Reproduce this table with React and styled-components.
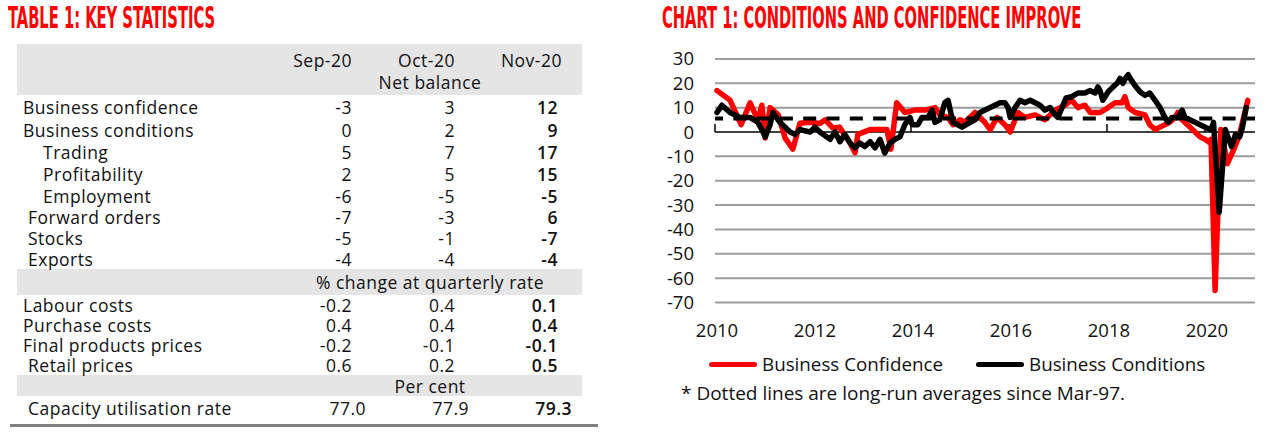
import styled, { createGlobalStyle } from 'styled-components';

const GlobalStyle = createGlobalStyle`
  html, body {
    margin: 0;
    padding: 0;
    background: #fff;
  }
  body {
    font-family: 'Open Sans', 'Noto Sans', sans-serif;
    color: #111;
  }
`;

// table content
const rows = [
  { label: 'Business confidence', indent: 6, h: 23, v: ['-3', '3', '12'] },
  { label: 'Business conditions', indent: 6, h: 23, v: ['0', '2', '9'] },
  { label: 'Trading', indent: 26, h: 22, v: ['5', '7', '17'] },
  { label: 'Profitability', indent: 26, h: 22, v: ['2', '5', '15'] },
  { label: 'Employment', indent: 26, h: 21, v: ['-6', '-5', '-5'] },
  { label: 'Forward orders', indent: 11, h: 21, v: ['-7', '-3', '6'] },
  { label: 'Stocks', indent: 11, h: 21, v: ['-5', '-1', '-7'] },
  { label: 'Exports', indent: 11, h: 21, v: ['-4', '-4', '-4'] },
  { band: '% change at quarterly rate', h: 26 },
  { label: 'Labour costs', indent: 6, h: 20, v: ['-0.2', '0.4', '0.1'] },
  { label: 'Purchase costs', indent: 6, h: 20, v: ['0.4', '0.4', '0.4'] },
  { label: 'Final products prices', indent: 6, h: 20, v: ['-0.2', '-0.1', '-0.1'] },
  { label: 'Retail prices', indent: 11, h: 20, v: ['0.6', '0.2', '0.5'] },
  { band: 'Per cent', h: 21 },
  { label: 'Capacity utilisation rate', indent: 11, h: 24, pr: 10, v: ['77.0', '77.9', '79.3'] },
];

// chart series, [months since Jan-2010, value]
const confidence = [
  [0, 17], [3.2, 13], [5.9, 3], [8.1, 12], [10, 5], [11, 11], [11.8, -2.5], [13, 10], [15, 7],
  [16.7, -2.5], [18.6, -7], [20.3, 3.6], [22.8, 4], [25.2, 3.5], [26.5, 5], [28.4, 1.6], [30, 2],
  [32.6, -4.5], [33.8, -8.5], [34.5, -1], [37.5, 1], [40, 1], [41.6, 1], [42.6, -7], [44, 12],
  [46, 8], [48.5, 9], [51, 9], [53.4, 10], [54.6, 7], [56.6, 6], [57.8, 3], [59.5, 5], [60.7, 4],
  [63.2, 8], [65.6, 4], [66.9, 1], [68.6, 6], [70.5, 3], [71.8, 0], [73.7, 8], [75.4, 6], [77.9, 7],
  [80.3, 5], [81.6, 7], [82.8, 9], [85.2, 11], [86.9, 13], [88.4, 10], [90.1, 11], [91.4, 8],
  [93.8, 8], [95.8, 10], [97.5, 12], [99.2, 12], [99.9, 14.5], [100.7, 10], [102.4, 8], [104.8, 7],
  [106, 3], [107.3, 1], [108.5, 2], [110.9, 4], [112.2, 6], [112.9, 8], [113.9, 5], [115.8, 2],
  [117.1, 0], [118.3, -2], [119.5, -3], [120.8, -4.5], [121, -3], [122, -65], [123.4, 1],
  [125, -13], [126.6, -7], [127.8, -2], [129, 6], [130, 13],
];

const conditions = [
  [0, 8], [1.2, 11], [3.2, 8], [5.6, 6], [8.1, 6], [10, 4], [11, 1], [11.8, -2], [13, 3], [13.7, 8],
  [15.4, 4], [17.9, 0], [19.1, -1], [20.3, 1], [22.8, 0], [24, 2], [25.2, 0], [27.7, -3], [28.9, 0],
  [30.1, -4], [31.3, -1], [32.6, -4.5], [33.8, -6.5], [35, -4.5], [36.2, -6], [37.5, -4],
  [38.7, -6.5], [39.9, -3], [41.1, -8.6], [42.4, -4.5], [43.6, -3], [44.8, -2], [46, 3], [47.3, 6],
  [47.8, 3], [49.2, 3], [50.2, 6], [51.7, 6], [52.7, 9], [53.4, 4], [54.6, 5], [55.8, 12],
  [56.6, 13], [57.8, 4], [60, 2], [62, 4], [63.2, 5], [64.4, 8], [66.9, 10], [69.3, 12], [70.5, 12],
  [71.3, 10], [71.8, 6], [73, 10], [74.2, 13], [75.4, 12], [76.7, 13], [77.9, 12], [79.1, 11],
  [80.3, 9], [81.6, 10], [82.8, 7], [83.5, 6], [84.5, 10], [85.5, 14], [86.9, 14.5], [88.4, 16],
  [90.1, 16], [91.4, 17], [92.6, 16], [93.3, 18.5], [93.8, 17], [94.5, 13], [95.8, 16.5], [97, 18.5],
  [98, 20], [98.7, 22], [99.4, 20], [100.2, 22.5], [100.7, 23.5], [101.2, 22], [102.4, 19],
  [103.6, 16.5], [104.8, 15], [106, 16], [107.3, 13], [108.5, 10], [109.7, 6], [110.5, 4],
  [111.4, 6], [112.9, 6], [113.9, 9], [114.6, 6], [115.8, 5], [117.1, 4], [118.3, 3], [119.5, 2],
  [120.8, 1], [121.2, 2], [121.6, 4], [123, -33], [124.5, 1], [126, -6], [127, -1], [128, -2],
  [128.7, 2], [129.6, 10],
];

const PX0 = 75;
const PX1 = 615;
const yOf = (v) => 92 - v * 2.437;
const xOf = (m) => 77 + m * 4.083;
const toPath = (pts) =>
  pts.map(([m, v], i) => `${i ? 'L' : 'M'}${xOf(m).toFixed(1)},${yOf(v).toFixed(1)}`).join(' ');

const ticks = [30, 20, 10, 0, -10, -20, -30, -40, -50, -60, -70];
const years = [2010, 2012, 2014, 2016, 2018, 2020];

function App() {
  return (
    <Page>
      <GlobalStyle />
      <LeftPanel>
        <Heading>TABLE 1: KEY STATISTICS</Heading>
        <Table>
          <HeadBand>
            <Row $h={22} $inBand>
              <span />
              <Num>Sep-20</Num>
              <Num>Oct-20</Num>
              <Num $shift={4}>Nov-20</Num>
            </Row>
            <Row $h={22} $inBand>
              <span />
              <Unit>Net balance</Unit>
            </Row>
          </HeadBand>
          {rows.map((r) =>
            r.band ? (
              <Row key={r.band} $h={r.h} $band>
                <span />
                <Unit>{r.band}</Unit>
              </Row>
            ) : (
              <Row key={r.label} $h={r.h} $pr={r.pr}>
                <Label $indent={r.indent}>{r.label}</Label>
                <Num>{r.v[0]}</Num>
                <Num>{r.v[1]}</Num>
                <Num $bold>{r.v[2]}</Num>
              </Row>
            )
          )}
        </Table>
      </LeftPanel>

      <RightPanel>
        <Heading $indent={22}>CHART 1: CONDITIONS AND CONFIDENCE IMPROVE</Heading>
        <ChartSvg width="624" height="305" viewBox="0 0 624 305">
          {ticks.map((t) =>
            t === 0 ? null : (
              <line key={t} x1={PX0} x2={PX1} y1={yOf(t)} y2={yOf(t)} stroke="#9c9c9c" strokeWidth="2" />
            )
          )}
          <line x1={PX0} x2={PX1} y1={yOf(0)} y2={yOf(0)} stroke="#000" strokeWidth="1.5" />
          {years.map((y) => (
            <line key={y} x1={xOf((y - 2010) * 12) - 2} x2={xOf((y - 2010) * 12) - 2} y1={yOf(0) - 8} y2={yOf(0)} stroke="#000" strokeWidth="1.5" />
          ))}
          {ticks.map((t) => (
            <text key={t} x="54" y={yOf(t) + 6.5} textAnchor="end" fontSize="18.5" fill="#111">
              {t}
            </text>
          ))}
          {years.map((y) => (
            <text key={y} x={xOf((y - 2010) * 12)} y="297" textAnchor="middle" fontSize="18.5" fill="#111">
              {y}
            </text>
          ))}
          <path d={toPath(confidence)} fill="none" stroke="#ff0000" strokeWidth="5.5" strokeLinejoin="round" strokeLinecap="round" />
          <path d={toPath(conditions)} fill="none" stroke="#000" strokeWidth="5.5" strokeLinejoin="round" strokeLinecap="round" />
          <line x1={PX0} x2={PX1} y1={yOf(5.5)} y2={yOf(5.5)} stroke="#000" strokeWidth="4" strokeDasharray="13 10.3" strokeDashoffset="5" />
        </ChartSvg>
        <Legend>
          <LegendItem>
            <Swatch $color="#ff0000" />
            Business Confidence
          </LegendItem>
          <LegendItem>
            <Swatch $color="#000" />
            Business Conditions
          </LegendItem>
        </Legend>
        <Note>* Dotted lines are long-run averages since Mar-97.</Note>
      </RightPanel>
    </Page>
  );
}

const Page = styled.div`
  display: flex;
  width: 1264px;
  height: 435px;
  overflow: hidden;
`;

const LeftPanel = styled.section`
  width: 640px;
  flex-shrink: 0;
  padding-left: 8px;
  box-sizing: border-box;
`;

const RightPanel = styled.section`
  flex: 1;
`;

const Heading = styled.h2`
  margin: 0 0 0 ${(p) => p.$indent || 0}px;
  height: 35px;
  font-family: 'DejaVu Sans Condensed', 'DejaVu Sans', sans-serif;
  font-weight: bold;
  font-size: 30px;
  line-height: 35px;
  color: #ff0000;
  white-space: nowrap;
  transform: scaleX(0.545);
  transform-origin: left center;
`;

const Table = styled.div`
  margin: 9px 0 0 2px;
  width: 588px;
  padding-bottom: 4px;
  border-bottom: 3px solid #808080;
`;

const HeadBand = styled.div`
  margin-left: 7px;
  width: 565px;
  padding: 5px 0 2px;
  background: #e5e5e5;
`;

const Row = styled.div`
  display: grid;
  grid-template-columns: 1fr 103px 103px 103px;
  align-items: center;
  height: ${(p) => p.$h}px;
  width: 565px;
  margin-left: ${(p) => (p.$inBand ? 0 : 7)}px;
  padding-right: ${(p) => (p.$pr !== undefined ? p.$pr : 24)}px;
  box-sizing: border-box;
  background: ${(p) => (p.$band ? '#e5e5e5' : 'transparent')};
  font-size: 17.5px;
  letter-spacing: 0.5px;
  line-height: 18px;
  white-space: nowrap;
`;

const Label = styled.span`
  padding-left: ${(p) => p.$indent}px;
`;

const Num = styled.span`
  text-align: right;
  font-weight: ${(p) => (p.$bold ? 600 : 400)};
  margin-right: ${(p) => -(p.$shift || 0)}px;
`;

const Unit = styled.span`
  grid-column: 2 / 5;
  text-align: center;
  padding-left: 53px;
`;

const ChartSvg = styled.svg`
  display: block;
  margin-top: 5px;
  font-family: 'Open Sans', 'Noto Sans', sans-serif;
`;

const Legend = styled.div`
  display: flex;
  align-items: center;
  gap: 33px;
  height: 24px;
  margin: 7px 0 0 69px;
  font-size: 18.8px;
`;

const LegendItem = styled.div`
  display: flex;
  align-items: center;
  gap: 5px;
`;

const Swatch = styled.span`
  width: 48px;
  height: 5px;
  border-radius: 3px;
  background: ${(p) => p.$color};
`;

const Note = styled.div`
  height: 24px;
  line-height: 24px;
  margin: 5px 0 0 41px;
  font-size: 19px;
  white-space: nowrap;
`;

export default App;
